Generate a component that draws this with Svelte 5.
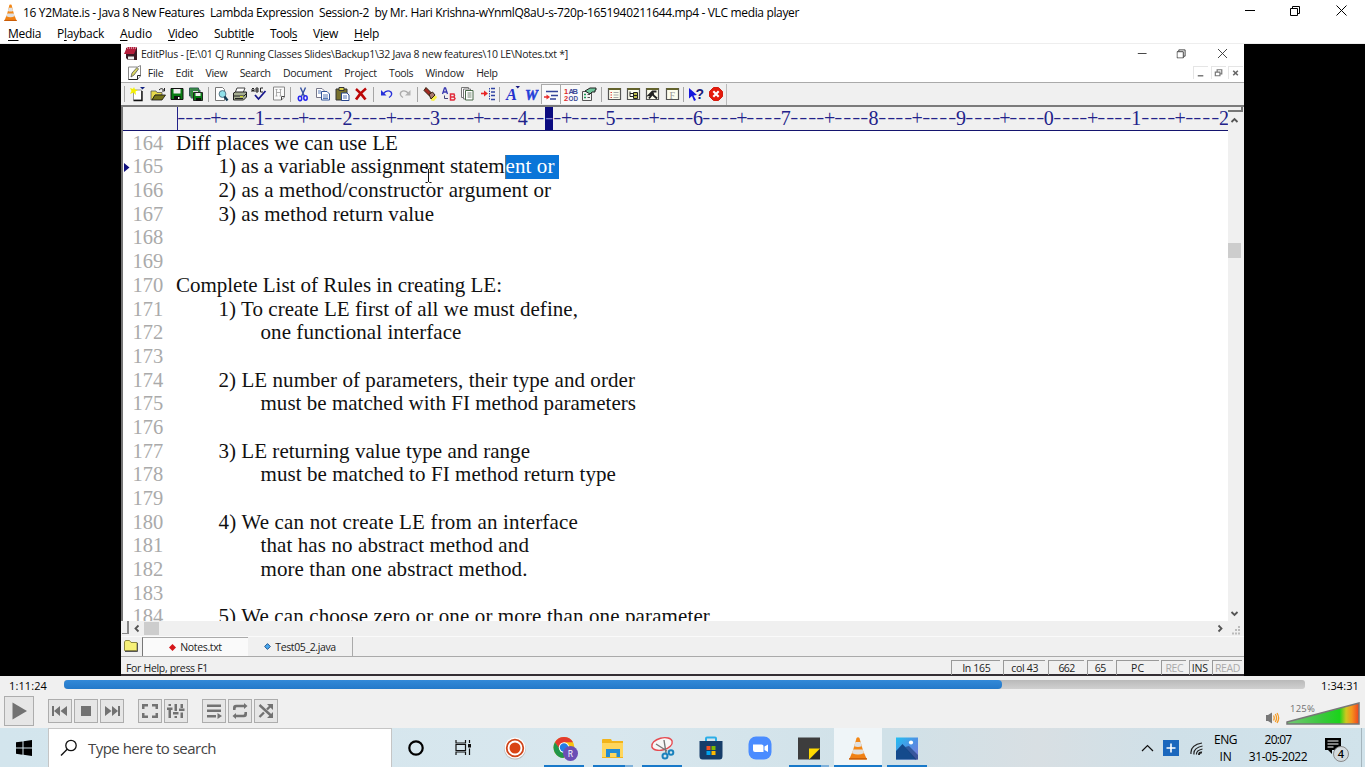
<script>
  // Spreads a run of text over the given width.
  function fit(node, width) {
    node.style.letterSpacing = '0px';
    const natural = node.getBoundingClientRect().width;
    const count = node.textContent.length;
    node.style.letterSpacing = (width - natural) / count + 'px';
  }

  const vlcMenu = [
    ['', 'M', 'edia', 33], ['P', 'l', 'ayback', 47], ['', 'A', 'udio', 32], ['', 'V', 'ideo', 30],
    ['Subti', 't', 'le', 40], ['Tool', 's', '', 27], ['V', 'i', 'ew', 25], ['', 'H', 'elp', 25]
  ];
  const editMenu = [
    ['File', 15.5], ['Edit', 17.5], ['View', 22], ['Search', 31], ['Document', 49],
    ['Project', 32.5], ['Tools', 24], ['Window', 38.5], ['Help', 21.5]
  ];
  const tools = [
    'new', 'open', 'save', 'saveall', '|', 'preview', 'print', 'spell', 'hex', '|',
    'cut', 'copy', 'paste', 'delete', '|', 'undo', 'redo', '|', 'find', 'replace', 'pages', 'goto', '|',
    'font', 'word', 'wrap', 'numbers', 'prefs', '|', 'list', 'tree', 'run', 'func', '|', 'help', 'stop'
  ];
  const ruler = Array.from({ length: 120 }, (_, i) => {
    if (i % 10 === 9) return String(((i + 1) / 10) % 10);
    return i % 10 === 4 ? '+' : '-';
  });
  const lines = [
    [164, 0, 'Diff places we can use LE', 222],
    [165, 1, '1) as a variable assignment statem', 286, 'ent or', 49],
    [166, 1, '2) as a method/constructor argument or', 332.5],
    [167, 1, '3) as method return value', 215.5],
    [168], [169],
    [170, 0, 'Complete List of Rules in creating LE:', 326],
    [171, 1, '1) To create LE first of all we must define,', 359.5],
    [172, 2, 'one functional interface', 201],
    [173],
    [174, 1, '2) LE number of parameters, their type and order', 416.5],
    [175, 2, 'must be matched with FI method parameters', 375.5],
    [176],
    [177, 1, '3) LE returning value type and range', 311.5],
    [178, 2, 'must be matched to FI method return type', 355.5],
    [179],
    [180, 1, '4) We can not create LE from an interface', 359.5],
    [181, 2, 'that has no abstract method and', 268.5],
    [182, 2, 'more than one abstract method.', 267],
    [183],
    [184, 1, '5) We can choose zero or one or more than one parameter', 491.5]
  ];
  const status = [
    ['ln 165', 49, 28], ['col 43', 42, 27], ['662', 36, 16], ['65', 26, 11], ['PC', 43, 13],
    ['REC', 25, 18, true], ['INS', 20, 16], ['READ', 30, 25, true]
  ];
  const controls = [
    ['prev', 'stopb', 'next'], ['full', 'eq'], ['playlist', 'loop', 'shuffle']
  ];
  const apps = [
    ['cortana'], ['taskview'], ['record'], ['chrome', 'on'], ['explorer', 'multi'], ['snip', 'on'],
    ['store'], ['zoom'], ['sticky', 'multi'], ['vlc', 'active'], ['photos', 'on']
  ];
</script>

{#snippet cone()}
  <path d="M3.4 11.5h9.2l2 4.5H1.4z" fill="#f08015" />
  <path d="M6.9.8Q8 0 9.1.8L12.4 12Q8 14.4 3.6 12z" fill="#f38716" />
  <path d="M6.1 3.6h3.8l.9 3Q8 7.6 5.2 6.6zM4.5 9h7l.8 2.5q-4.3 2-8.6 0z" fill="#e0e0e0" />
  <path d="M1.4 15h13.2v1H1.4z" fill="#c95d08" />
{/snippet}

{#snippet winButtons(gap1, gap2)}
  <svg width="11" height="11" viewBox="0 0 11 11"><path d="M0 5.5h10" /></svg>
  <svg width="11" height="11" viewBox="0 0 11 11" style:margin-left="{gap1}px"><path d="M.5 3.5h7v7h-7zM2.5 3V1.500h7v7H8" /></svg>
  <svg width="11" height="11" viewBox="0 0 11 11" style:margin-left="{gap2}px"><path d="M.5.5l10 10M10.500.5l-10 10" /></svg>
{/snippet}

{#snippet tool(n)}
  <svg width="16" height="16" viewBox="0 0 16 16" fill="none">
    {#if n === 'new'}
      <path d="M3.500 4h8v10h-8z" fill="#fff" stroke="#999" /><path d="M12 5v9.500H3.500" stroke="#111" stroke-width="1.4" />
      <path d="M4 1l1 2.500L8 4 5.500 5.500 6 9 3.500 6.500 0 8l1.500-3L0 2l3 1z" fill="#f4f000" /><path d="M10 1h5l-2.500 2.500z" fill="#102080" />
    {:else if n === 'open'}
      <path d="M1 5h5l1 1.500h5V9H5l-3 5H1z" fill="#e6d94a" stroke="#555" stroke-width=".8" /><path d="M5 9h10.500L12 14H2z" fill="#77751a" stroke="#111" stroke-width=".8" /><path d="M9 4q3-3 5 .5M14.500 2v3H12" stroke="#222" />
    {:else if n === 'save'}
      <path d="M2 2.500h12v11H2z" fill="#087c14" stroke="#111" /><path d="M4.500 3h7v4.500h-7z" fill="#eee" /><path d="M5 10h6.500v4H5z" fill="#111" /><path d="M9 11h1.500v2H9z" fill="#fff" />
    {:else if n === 'saveall'}
      <path d="M1.500 2h9v8h-9z" fill="#31a532" stroke="#355" /><path d="M3 4h9v8H3z" fill="#289c2c" stroke="#466" /><path d="M5 5h5v2H5z" fill="#ddd" /><path d="M5.500 6.500h9v8h-9z" fill="#087c14" stroke="#222" /><path d="M7.500 7h5v3h-5z" fill="#eee" /><path d="M8 12h5v3H8z" fill="#111" />
    {:else if n === 'preview'}
      <path d="M2.500 1.500h7l2 2v11h-9z" fill="#fff" stroke="#777" /><circle cx="9.500" cy="8" r="3.400" fill="#8fe1ea" stroke="#578" /><path d="M11.500 10.500l3 4" stroke="#133b55" stroke-width="2.400" />
    {:else if n === 'print'}
      <path d="M5 2h8l-2 5H3z" fill="#fff" stroke="#444" /><path d="M1.500 7l2-1h11v5l-3 3h-10z" fill="#a5ad91" stroke="#222" /><path d="M2 10h10l2-2M3 12.500h8" stroke="#222" /><path d="M8 10.700h3" stroke="#e7ef16" />
    {:else if n === 'spell'}
      <path d="M1 6V3l1-1 1 1v3M1 4.500h2M5 2v4h2V2zM5 4h2M12 2H9.500v4H12" stroke="#222" /><path d="M4 9l3.500 4L14.500 5" stroke="#16168d" stroke-width="1.800" />
    {:else if n === 'hex'}
      <path d="M2.500 1h11v10l-3 3h-8z" fill="#fafafa" stroke="#888" /><path d="M13.500 10.500h-3V14" stroke="#444" /><path d="M5.500 3.500v6.500M9.500 3.500v6.500M5.500 6.500h4M4.500 3.500h2M8.500 3.500h2M4.500 10h2M8.500 10h2" stroke="#999" stroke-width=".8" />
    {:else if n === 'cut'}
      <path d="M5.500 1.500l4 9M10.500 1.500l-4 9" stroke="#3450a0" stroke-width="1.400" /><ellipse cx="5" cy="12.500" rx="1.700" ry="2.200" stroke="#2424ef" stroke-width="1.500" /><ellipse cx="10.500" cy="12" rx="1.700" ry="2.200" stroke="#2424ef" stroke-width="1.500" />
    {:else if n === 'copy'}
      <path d="M1.500 2.500H7l2 2v7H1.500z" fill="#fff" stroke="#778" /><path d="M6.500 5.500H12l2.500 2.500v6h-8z" fill="#fff" stroke="#34579b" /><path d="M3 5h3M3 7h3M8 9h5M8 11h5M8 12.500h5" stroke="#567bb8" />
    {:else if n === 'paste'}
      <path d="M2 3h11v11H2z" fill="#77702c" stroke="#333" /><path d="M5 1.500h5v3H5z" fill="#ded44b" stroke="#333" /><path d="M7.500 7H13l2 2v5.500H7.500z" fill="#fff" stroke="#29468d" /><path d="M9 10h4M9 12h4" stroke="#5474b9" />
    {:else if n === 'delete'}
      <path d="M3 3q5 4 9.500 10.500M13 2.500Q7 7 3 13.500" stroke="#bc0707" stroke-width="2.600" />
    {:else if n === 'undo'}
      <path d="M5 8q4-5 8-2 2 3-2 5.500" stroke="#2630da" stroke-width="1.400" /><path d="M3 4v5.500h5.500z" fill="#2630da" />
    {:else if n === 'redo'}
      <path d="M12 8Q8 3 4 6q-2 3 2 5.500" stroke="#aaa" stroke-width="1.400" /><path d="M13.500 4v5.500H8z" fill="#b2b2b2" />
    {:else if n === 'find'}
      <path d="M9 11l5-1.500 1 2-3 3.500-3-.5z" fill="#f8f24c" /><path d="M4 1.500l5.500 5.500L7 9.500 2 4.500z" fill="#a22a22" stroke="#321" /><path d="M7 8.500L10.500 6l2.500 3-4 4z" fill="#a87a70" stroke="#321" />
    {:else if n === 'replace'}
      <path d="M1.500 8l2-6h1l2 6M2.500 6h3" stroke="#3838b0" stroke-width="1.300" /><path d="M3.500 9.500v3h3.500" stroke="#447" /><path d="M9.500 8v6H13l1-1.500-1-1.500H9.500H13l.5-1.500L13 8z" stroke="#e12d3c" stroke-width="1.500" />
    {:else if n === 'pages'}
      <path d="M1.500 1.500h7v10h-7z" fill="#fff" stroke="#777" /><path d="M3.500 3h7v10h-7z" fill="#fff" stroke="#777" /><path d="M5.500 4.500H13V14H5.500z" fill="#fff" stroke="#486948" /><path d="M7.500 7h4M7.500 9h4M7.500 11h4" stroke="#738873" />
    {:else if n === 'goto'}
      <path d="M1 7.500h5" stroke="#e82727" stroke-width="1.600" /><path d="M4 4.500l4 3-4 3z" fill="#e82727" /><path d="M9.500 2v12" stroke="#3044a4" stroke-dasharray="1.500 1" /><path d="M11 2.500h4M11 6h4M11 9.500h4M11 13.500h4" stroke="#3044a4" stroke-width="1.300" />
    {:else if n === 'font'}
      <path d="M11.500 0h4.500l-2.200 2.500z" fill="#171782" /><text x="2" y="13.500" font-size="16.500" font-style="italic" font-weight="bold" fill="#2630ce" textLength="11" lengthAdjust="spacingAndGlyphs">A</text>
    {:else if n === 'word'}
      <text x="2" y="13.500" font-size="15" font-style="italic" font-weight="bold" fill="#2440d9" stroke="#2440d9" stroke-width=".5" textLength="13" lengthAdjust="spacingAndGlyphs">W</text>
    {:else if n === 'wrap'}
      <path d="M3 4.500h12M8 8.500h7M7 12h6" stroke="#334399" stroke-width="1.400" /><path d="M1 10h4" stroke="#e82c2c" stroke-width="1.500" /><path d="M3.500 7.500l3.500 2.500-3.500 2.500z" fill="#e82c2c" />
    {:else if n === 'numbers'}
      <g font-family="Liberation Sans" font-size="7.500" font-weight="bold"><text x="1" y="7" fill="#dd2929">1</text><text x="5.500" y="7" fill="#3e4d98" textLength="9.500">AB</text><text x="1" y="14" fill="#dd2929">2</text><text x="5.500" y="14" fill="#3e4d98" textLength="9.500" lengthAdjust="spacingAndGlyphs">OD</text></g>
    {:else if n === 'prefs'}
      <path d="M1.500 5.500h9v9h-9z" fill="#f4f4f4" stroke="#555" /><path d="M3 8.500h2M3 11.500h2" stroke="#1b9b59" stroke-width="1.500" /><path d="M6.500 8.500H9M6.500 11.500H9" stroke="#555" /><path d="M4 5l5-3h6v2h-1v2h-3L9 8z" fill="#70c69c" stroke="#222" />
    {:else if n === 'list' || n === 'tree' || n === 'run' || n === 'func'}
      <path d="M2.500 2.500h12v11h-12z" fill="#fdfdee" stroke="#555" stroke-width="1.200" /><path d="M2.500 3h12" stroke="#63632c" stroke-width="2" />
      {#if n === 'list'}<path d="M4.500 6.500H6M4.500 9H6M4.500 11.500H6" stroke="#d44" /><path d="M7.500 6.500h5M7.500 9h5M7.500 11.500h5" stroke="#aaa" />{/if}
      {#if n === 'tree'}<path d="M5 5.500v5h3M5 7.500h3" stroke="#222" /><path d="M8.500 6.500h4v6h-4z" fill="#bfbd4a" stroke="#222" /><path d="M8.500 9.500h4" stroke="#222" />{/if}
      {#if n === 'run'}<path d="M12.500 5.500h-4l-3.500 3.500 3-.5-3 4M8.500 6.500l1 3 3.500 3" stroke="#222" stroke-width="1.900" />{/if}
      {#if n === 'func'}<text x="5.500" y="12.500" font-size="10" fill="#999">F</text>{/if}
    {:else if n === 'help'}
      <path d="M1 2l8 7-3.500.5L8 14l-2 1-2-5-3 2.500z" fill="#1616dd" /><text x="7.500" y="13" font-family="Liberation Sans" font-size="14" font-weight="bold" fill="#1b1b7b">?</text>
    {:else if n === 'stop'}
      <path d="M5.500 1.500h5l4 4v5l-4 4h-5l-4-4v-5z" fill="#e51b0c" stroke="#d41c10" /><path d="M5.300 5.300l5.400 5.400M10.700 5.300l-5.400 5.400" stroke="#fff" stroke-width="2.100" />
    {/if}
  </svg>
{/snippet}

{#snippet control(n)}
  <svg width="22" height="22" viewBox="0 0 22 22" fill="#727272">
    {#if n === 'prev'}<path d="M3 6h2v10H3zM5 11l6-5v10zM11.500 11L18 6v10z" />
    {:else if n === 'stopb'}<path d="M6 6h10v10H6z" />
    {:else if n === 'next'}<path d="M17 6h2v10h-2zM17 11l-6-5v10zM10.500 11L4 6v10z" />
    {:else if n === 'full'}<path d="M3 4h6v2.500H5.500V9H3zM13 4h6v5h-2.500V6.500H13zM3 13h2.500v2.500H9V18H3zM16.500 13H19v5h-6v-2.500h3.500z" />
    {:else if n === 'eq'}<path d="M3.500 8.500h2.500v9.500H3.500zM2 7.500h5.500V10H2zM3.500 4h2.500v2H3.500zM9.500 4H12v7H9.500zM8 12h5.500v2.500H8zM9.500 16H12v2H9.500zM15.500 4H18v4h-2.500zM14 8.500h5.500V11H14zM15.500 12.500H18V18h-2.500z" />
    {:else if n === 'playlist'}<path d="M4 4.500h14V7H4zM4 9.500h14V12H4zM4 15h9v2.500H4zM14.500 13l4.500 3-4.500 3z" />
    {:else if n === 'loop'}<path d="M4 10V8q0-3.300 3-3.300h8V3l3.500 3L15 9V7.200H7.500Q6.500 7.200 6.500 10zM18 12v2q0 3.300-3 3.300H7V19l-3.500-3L7 13v1.800h7.500q1 0 1-2.800z" />
    {:else if n === 'shuffle'}<path d="M4.500 5l12 11M4.500 17L9 12.500M12 9.500l4-4" stroke="#727272" stroke-width="2.400" /><path d="M12 4h6v6zM18 12v6h-6z" />{/if}
  </svg>
{/snippet}

{#snippet app(n)}
  <svg width="26" height="26" viewBox="0 0 26 26" fill="none">
    {#if n === 'cortana'}<circle cx="13" cy="13" r="6.700" stroke="#000" stroke-width="2.200" />
    {:else if n === 'taskview'}<g stroke="#111" stroke-width="1.200"><path d="M4 5v3h9.500V5M4 20v-3h9.500v3M4 9.500h9.500v6H4zM17.500 5v3M17.500 13.500V20" /></g><path d="M16 9h3v3.500h-3z" fill="#111" />
    {:else if n === 'record'}<circle cx="13" cy="13.800" r="10.800" fill="#bbb" /><circle cx="13" cy="13" r="10.500" fill="#fff" /><circle cx="13" cy="13" r="8.300" stroke="#cf461c" stroke-width="1.800" /><circle cx="13" cy="13" r="5.500" fill="#d94314" />
    {:else if n === 'chrome'}<circle cx="12" cy="12.500" r="10.500" fill="#f8c40f" /><path d="M2.900 7.200a10.500 10.500 0 0 1 18.200 0H12L8 15z" fill="#e33b2e" /><path d="M2.900 7.200a10.500 10.500 0 0 0 8.600 15.800l5-8-7 1z" fill="#21964a" /><circle cx="12" cy="12.500" r="5.200" fill="#fff" /><circle cx="12" cy="12.500" r="4.200" fill="#247ce6" /><circle cx="18.500" cy="18.500" r="7.500" fill="#6b4eb5" /><text x="15.700" y="21.800" font-family="Open Sans" font-size="8.500" fill="#fff">R</text>
    {:else if n === 'explorer'}<path d="M2 5q0-1 1-1h8l1 2h11v17H2z" fill="#f2b41b" /><path d="M2 8h21v14H2z" fill="#ffd65c" /><path d="M6 22v-8h14v8h-3.500v-4h-6.500v4z" fill="#258bd1" />
    {:else if n === 'snip'}<ellipse cx="13" cy="9" rx="10.500" ry="6" transform="rotate(-15 13 9)" fill="#f7f7f7" stroke="#e64a50" stroke-width="1.400" /><path d="M7 9l11 7M15 5l2 13" stroke="#777" stroke-width="1.400" /><circle cx="16" cy="21" r="2.500" stroke="#1b82bd" stroke-width="2" /><circle cx="22" cy="17.500" r="2.300" stroke="#1b82bd" stroke-width="2" />
    {:else if n === 'store'}<path d="M8 7V3.500q0-1 1-1h8q1 0 1 1V7" stroke="#2caee7" stroke-width="2" /><path d="M1.500 6h23v15q0 3.500-3 3.500h-17q-3 0-3-3.500z" fill="#163d69" /><path d="M8.500 11h4v4h-4z" fill="#f25022" /><path d="M13.500 11h4v4h-4z" fill="#7fba00" /><path d="M8.500 16h4v4h-4z" fill="#00a4ef" /><path d="M13.500 16h4v4h-4z" fill="#ffb900" />
    {:else if n === 'zoom'}<rect x="1.500" y="1.500" width="23" height="23" rx="7.500" fill="#4a8cff" /><path d="M6 9.500h8.500q2 0 2 2V17H8q-2 0-2-2zM17.500 11.500L21 9.500v7.500l-3.500-2z" fill="#fff" />
    {:else if n === 'sticky'}<path d="M2 2.500h22V14L13.500 24.500H2z" fill="#3d3d3d" /><path d="M13 24.500h11V13.500z" fill="#2a2a2a" /><path d="M13 13.500h11L13 24.500z" fill="#ffda00" />
    {:else if n === 'vlc'}<g transform="translate(2.200 1.800) scale(1.350 1.420)">{@render cone()}</g>
    {:else if n === 'photos'}<defs><linearGradient id="sky" x2="1" y2="1"><stop stop-color="#22bff1" /><stop offset=".5" stop-color="#4d92e5" /><stop offset="1" stop-color="#8177d4" /></linearGradient></defs><path d="M2 2.500h22v22H2z" fill="url(#sky)" /><path d="M2 16l6.500-7 14 15.500H2z" fill="#144a8c" /><path d="M11 12l4-1 9 9v4.500h-3z" fill="#1d3d79" opacity=".65" /><circle cx="17" cy="7.500" r="2.100" fill="#fff" />{/if}
  </svg>
{/snippet}

<div class="screen">
  <header class="titlebar">
    <svg class="vlcicon" width="15" height="17" viewBox="0 0 16 16" preserveAspectRatio="none">{@render cone()}</svg>
    <span class="run" use:fit={776}>16 Y2Mate.is - Java 8 New Features&nbsp; Lambda Expression&nbsp; Session-2&nbsp; by Mr. Hari Krishna-wYnmlQ8aU-s-720p-1651940211644.mp4 - VLC media player</span>
    <div class="winbtns">{@render winButtons(34, 35)}</div>
  </header>
  <nav class="vlcmenu">
    {#each vlcMenu as [a, b, c, w]}
      <span class="run" use:fit={w}>{a}<u>{b}</u>{c}</span>
    {/each}
  </nav>

  <main class="video">
    <section class="editor">
      <div class="ep-title">
        <svg width="14" height="16" viewBox="0 0 14 16"><path d="M2 2h11v12H4L2 12z" fill="#391923" /><path d="M3 1h10L10 8H0z" fill="#b51e3c" /><path d="M4 10.500h6v3H4z" fill="#eee" /><path d="M3 2h9" stroke="#eee" stroke-dasharray="1 1" /></svg>
        <span class="run" use:fit={427}>EditPlus - [E:\01 CJ Running Classes Slides\Backup1\32 Java 8 new features\10 LE\Notes.txt *]</span>
        <div class="winbtns small">{@render winButtons(28, 30)}</div>
      </div>
      <div class="ep-menu">
        <svg width="13" height="15" viewBox="0 0 13 15"><path d="M.5 2h9l3-1.500V11l-3 3.500h-9z" fill="#fff" stroke="#888" /><path d="M12.500 10.500h-3v4M.5 14.500h9" stroke="#222" fill="none" /><path d="M3 12l1-4 5-5.500L10.500 4 6 10z" fill="#dcd860" stroke="#555" stroke-width=".8" /></svg>
        {#each editMenu as [t, w]}<span class="run" use:fit={w}>{t}</span>{/each}
        <div class="mdi">
          <svg width="15" height="13" viewBox="0 0 15 13"><path d="M4 9.500h6" stroke="#777" stroke-width="1.600" /></svg>
          <svg width="15" height="13" viewBox="0 0 15 13" fill="none"><path d="M3.500 5.500h5v4h-5zM5.500 5V3h5v4.500H9" stroke="#777" stroke-width="1.300" /></svg>
          <svg width="15" height="13" viewBox="0 0 15 13"><path d="M4.500 4l5 5M9.500 4l-5 5" stroke="#666" stroke-width="1.700" /></svg>
        </div>
      </div>
      <div class="toolbar">
        <i class="grip"></i>
        {#each tools as t}
          {#if t === '|'}<i class="sep"></i>
          {:else}<span class="tool" class:pressed={t === 'wrap' || t === 'numbers'}>{@render tool(t)}</span>{/if}
        {/each}
        <i class="toolend"></i>
      </div>
      <div class="pane">
        <div class="doc">
          <div class="ruler">
            {#each ruler as ch, i}<span class:cur={i === 42} class:dash={ch === '-'}><b>{ch}</b></span>{/each}
          </div>
          <div class="text">
            {#each lines as [no, ind, t, w, sel, sw]}
              <div class="line">
                <span class="mark">{#if no === 165}<svg width="6" height="9" viewBox="0 0 6 9"><path d="M0 0l5.500 4.500L0 9z" fill="#10107e" /></svg>{/if}</span>
                <span class="no">{no}</span>
                {#if t}<span class="code indent{ind}"><span class="run" use:fit={w}>{t}</span>{#if sel}<mark><span class="run" use:fit={sw}>{sel}</span></mark>{/if}</span>{/if}
              </div>
            {/each}
            <svg class="ibeam" width="7" height="15" viewBox="0 0 7 15"><path d="M.5.5h2l1 1 1-1h2M3.500 1v13M.5 14.500h2l1-1 1 1h2" stroke="#111" fill="none" /></svg>
          </div>
        </div>
        <div class="vscroll">
          <i class="split"></i>
          <svg width="9" height="6" viewBox="0 0 9 6"><path d="M1.500 5l3-3 3 3" /></svg>
          <i class="thumb"></i>
          <svg class="down" width="9" height="6" viewBox="0 0 9 6"><path d="M1.500 1l3 3 3-3" /></svg>
        </div>
      </div>
      <div class="hscroll">
        <i class="splith"></i>
        <svg width="6" height="9" viewBox="0 0 6 9"><path d="M4.500 1.500l-3 3 3 3" /></svg>
        <i class="hthumb"></i>
        <svg class="right" width="6" height="9" viewBox="0 0 6 9"><path d="M1.500 1.500l3 3-3 3" /></svg>
        <svg class="sizer" width="9" height="9" viewBox="0 0 9 9"><path d="M6 1h2M3 4h2M6 4h2M0 7.500h2M3 7.500h2M6 7.500h2" /></svg>
      </div>
      <div class="tabs">
        <svg class="folder" width="14" height="12" viewBox="0 0 14 12"><path d="M.5 2l1-1.500h4L7 2.500h6v8H.5z" fill="#f7f178" stroke="#8f8a40" /><path d="M1 11.500h12.500V3" stroke="#555" fill="none" /></svg>
        <div class="tab active"><svg width="7" height="7" viewBox="0 0 8 8"><path d="M4 0l4 4-4 4-4-4z" fill="#d5161a" /></svg><span class="run" use:fit={41.5}>Notes.txt</span></div>
        <div class="tab"><svg width="7" height="7" viewBox="0 0 8 8"><path d="M4 .7L7.300 4 4 7.300.7 4z" fill="#4aa7ed" stroke="#174a84" /></svg><span class="run" use:fit={60.500}>Test05_2.java</span></div>
      </div>
      <div class="status">
        <span class="run helptext" use:fit={82}>For Help, press F1</span>
        {#each status as [t, w, tw, dim]}
          <span class="cell" class:dim style:width="{w}px"><span class="run" use:fit={tw}>{t}</span></span>
        {/each}
      </div>
    </section>
  </main>

  <footer class="player">
    <div class="seek">
      <span class="run" use:fit={38}>1:11:24</span>
      <div class="track"><i></i></div>
      <span class="run" use:fit={38}>1:34:31</span>
    </div>
    <div class="buttons">
      <button class="play" aria-label="Play"><svg width="28" height="28" viewBox="0 0 28 28"><path d="M7.500 5.500v17L22 14z" fill="#727272" /></svg></button>
      {#each controls as group}
        <div class="group">{#each group as n}<button aria-label={n}>{@render control(n)}</button>{/each}</div>
      {/each}
      <div class="volume">
        <svg class="speaker" width="16" height="14" viewBox="0 0 16 14" fill="none"><path d="M1 4h2l4-2.500v11L3 10H1z" fill="#777" /><path d="M8.500 4.500q1.500 2.500 0 5M10.300 3q2.500 4 0 8M12 2q3.300 5 0 10" stroke="#f49b25" stroke-width="1.300" /></svg>
        <div class="ramp">
          <svg width="74" height="23" viewBox="0 0 74 23"><defs><linearGradient id="vol"><stop stop-color="#75c875" /><stop offset=".5" stop-color="#38c83b" /><stop offset=".73" stop-color="#1bd41b" /><stop offset=".82" stop-color="#cfc81f" /><stop offset=".9" stop-color="#f5941c" /><stop offset="1" stop-color="#f04020" /></linearGradient></defs><path d="M1 20L73 1v21H1z" fill="url(#vol)" stroke="#777" stroke-width="1.500" /></svg>
          <span class="run pct" use:fit={25}>125%</span>
        </div>
      </div>
    </div>
  </footer>

  <div class="taskbar">
    <div class="start"><svg width="16" height="16" viewBox="0 0 16 16"><path d="M0 2.300L6.500 1.400v6.200H0zM7.500 1.200L16 0v7.600H7.500zM0 8.500h6.500v6.200L0 13.800zM7.500 8.500H16V16l-8.500-1.200z" /></svg></div>
    <div class="search">
      <svg width="18" height="18" viewBox="0 0 18 18"><circle cx="11" cy="6.500" r="5.200" fill="none" stroke="#111" stroke-width="1.300" /><path d="M7.200 10.300L1 16.500" stroke="#111" stroke-width="1.400" /></svg>
      <span class="run" use:fit={128}>Type here to search</span>
    </div>
    <div class="apps">
      {#each apps as [n, state]}<div class="app {n} {state ?? ''}">{@render app(n)}</div>{/each}
    </div>
    <div class="tray">
      <svg width="13" height="8" viewBox="0 0 13 8"><path d="M1 7l5.500-5.500L12 7" fill="none" stroke="#111" stroke-width="1.200" /></svg>
      <svg class="plus" width="16" height="16" viewBox="0 0 16 16"><path d="M0 0h16v16H0z" fill="#1b67bd" /><path d="M8 3.500v9M3.500 8h9" stroke="#fff" stroke-width="1.600" /></svg>
      <svg class="wifi" width="14" height="14" viewBox="0 0 14 14" fill="none" stroke="#222" stroke-width="1.200"><path d="M1 12Q0 3 12 1M4 12.500Q3 6 12.500 4M6.500 12.500Q6 8.500 12.500 7" /><path d="M9 13q0-3 3-2.500" stroke-width="2" /></svg>
      <div class="lang"><span class="run" use:fit={23}>ENG</span><span class="run" use:fit={12}>IN</span></div>
      <div class="clock"><span class="run" use:fit={27}>20:07</span><span class="run" use:fit={58.500}>31-05-2022</span></div>
      <div class="notes">
        <svg width="16" height="16" viewBox="0 0 16 16"><path d="M0 0h16v12H7v4l-4-4H0z" /><path d="M2.500 3h11M2.500 6h11M2.500 9h6" stroke="#fff" /></svg>
        <span class="badge">4</span>
      </div>
      <i class="peek"></i>
    </div>
  </div>
</div>

<style>
  :global(body) { margin: 0; overflow: hidden; }
  .screen { width: 1365px; height: 767px; display: flex; flex-direction: column; background: #fff; font-family: "Open Sans", "Noto Sans", sans-serif; font-size: 12px; color: #000; overflow: hidden; }
  .screen * { box-sizing: border-box; }
  svg { display: block; flex: none; }
  .run { display: inline-block; white-space: nowrap; flex: none; }
  i { display: block; flex: none; }
  .titlebar { height: 24px; display: flex; align-items: center; padding: 0 18px 0 3px; }
  .vlcicon { margin-right: 5px; }
  .winbtns { margin-left: auto; display: flex; height: 11px; margin-top: -4px; }
  .winbtns svg { fill: none; stroke: #000; stroke-width: 1; }
  .winbtns.small svg { stroke: #333; transform: scale(.9); }
  .vlcmenu { height: 20px; display: flex; align-items: center; gap: 16px; padding-left: 8px; border-bottom: 1px solid #eee; }
  u { text-underline-offset: 2px; text-decoration-thickness: 1px; }
  .video { height: 632px; background: #000; padding: 0 121px; flex: none; }
  .editor { width: 1123px; height: 632px; background: #f0f0f0; display: flex; flex-direction: column; font-size: 10.5px; color: #222; border-bottom: 2px solid #332e33; }
  .ep-title { height: 20px; background: #fff; display: flex; align-items: center; padding: 0 16px 0 3px; flex: none; }
  .ep-title > .run { margin-left: 3px; }
  .ep-title .winbtns { margin-top: -2px; }
  .ep-menu { height: 19px; background: #fff; display: flex; align-items: center; gap: 12.3px; padding: 0 0 1px 7px; border-bottom: 1px solid #aaa; flex: none; }
  .ep-menu > svg { margin-right: -5.500px; }
  .mdi { margin-left: auto; display: flex; gap: 2.500px; padding-right: 1px; }
  .mdi svg { border-left: 1px solid #e5e5e5; border-top: 1px solid #e5e5e5; }
  .toolbar { height: 22px; display: flex; align-items: center; padding: 0 0 0 3px; flex: none; }
  .grip { width: 1px; height: 16px; background: #aaa; margin-right: 3.800px; }
  .tool { width: 19.300px; height: 20px; display: flex; justify-content: center; align-items: center; flex: none; font-family: "Liberation Serif", serif; }
  .tool.pressed { background: #fafafa; border-left: 1px solid #aaa; border-top: 1px solid #aaa; }
  .sep { width: 5.270px; height: 15px; background: linear-gradient(90deg, transparent 2px, #a5a5a5 2px, #a5a5a5 3px, transparent 3px); }
  .toolend { width: 1px; height: 21px; background: #bbb; margin-left: 1px; }
  .pane { height: 516px; display: flex; border-top: 2px solid #7b7b7b; flex: none; }
  .doc { width: 1107px; border-left: 2px solid #777; overflow: hidden; background: #fff; }
  .ruler { height: 24px; border-bottom: 1px solid #14146e; background: #f0f0f0; padding-left: 53.500px; display: flex; font: 20px/23px "Liberation Serif", serif; color: #22228a; }
  .ruler span { width: 8.780px; flex: none; display: flex; justify-content: center; }
  .ruler span:first-child { border-left: 1px solid #22228a; }
  .ruler b { font-weight: 400; }
  .ruler .dash b { transform: translateY(-1px) scale(1.200, .8); }
  .ruler .cur { background: #0b0b80; color: #8686d0; }
  .text { position: relative; height: 490px; padding-top: .800px; overflow: hidden; font: 21px/23.680px "Liberation Serif", serif; color: #111; }
  .line { height: 23.680px; display: flex; align-items: center; }
  .mark { width: 9.500px; padding-left: 1px; flex: none; }
  .no { width: 43.500px; color: #aaa; flex: none; font-size: 20.500px; }
  .code { display: flex; height: 23.680px; }
  .indent1 { padding-left: 42.500px; }
  .indent2 { padding-left: 84.500px; }
  mark { background: #0a75d8; color: #fff; padding: 0 4px 0 0; height: 23.680px; border-left: 1px solid #777; }
  .ibeam { position: absolute; left: 302px; top: 37px; }
  .vscroll { width: 16px; background: #f0f0f0; padding-right: 3px; display: flex; flex-direction: column; align-items: center; }
  .vscroll svg, .hscroll svg { fill: none; stroke: #555; stroke-width: 1.800; }
  .split { width: 15px; height: 5px; margin-bottom: 5px; border: solid #777; border-width: 0 2px 2px 0; align-self: flex-start; }
  .thumb { width: 13px; height: 15px; background: #cdcdcd; margin-top: 120px; }
  .down { margin-top: auto; margin-bottom: 4px; }
  .hscroll { height: 16px; display: flex; align-items: center; border-bottom: 1px solid #fafafa; flex: none; }
  .splith { width: 7px; height: 13px; border: solid #888; border-width: 0 2px 1px 0; margin: 0 5px 0 1px; align-self: flex-start; }
  .hthumb { width: 15px; height: 13px; background: #cdcdcd; margin-left: 4px; }
  .hscroll .right { margin-left: auto; }
  .hscroll .sizer { stroke: #bbb; margin: 4px 3px 0 9px; }
  .tabs { height: 20px; display: flex; border-bottom: 1px solid #aaa; flex: none; }
  .folder { margin: 3px 4px 0 3px; }
  .tab { width: 105px; height: 19px; display: flex; align-items: center; justify-content: center; gap: 4px; border-right: 1px solid #aaa; }
  .tab.active { width: 106px; background: #fafafa; border-left: 1px solid #777; border-top: 1px solid #aaa; border-right: 0; }
  .status { height: 18px; display: flex; align-items: flex-end; gap: 2.800px; padding: 0 2px 0 5px; flex: none; }
  .helptext { margin-right: auto; }
  .cell { height: 15px; line-height: 15px; border-left: 1px solid #999; border-top: 1px solid #999; text-align: center; flex: none; }
  .dim { color: #aaa; }
  .player { height: 52px; background: #f0f0f0; display: flex; flex-direction: column; flex: none; }
  .seek { height: 20px; display: flex; align-items: center; padding: 0 0 1px 9px; font-size: 11px; }
  .track { width: 1241px; height: 9px; margin: -2px 16px 0 17px; border-radius: 3px; background: linear-gradient(#b9b9b9, #d0d0d0); flex: none; }
  .track i { width: 938px; height: 9px; border-radius: 4px; background: linear-gradient(#3389d8, #2479c9); }
  .buttons { height: 32px; display: flex; align-items: center; padding: 0 5px 2px 4px; }
  button { width: 24px; height: 24px; padding: 0; border: 1px solid #adadad; background: #e6e6e6; flex: none; }
  .play { width: 30px; height: 30px; }
  .group { display: flex; gap: 2px; margin-left: 14px; }
  .volume { margin-left: auto; display: flex; align-items: flex-end; height: 26px; }
  .speaker { margin: 0 5px -1px 0; }
  .ramp { position: relative; margin-bottom: 1px; }
  .ramp svg { transform: translateY(2px); }
  .pct { position: absolute; left: 4px; top: 2px; font-size: 9.500px; color: #707070; }
  .taskbar { height: 39px; display: flex; background: linear-gradient(90deg, #d3e5ed 0, #d8e7ee 45%, #d0e1e8 65%, #d8dfe3 76%, #cfe0e8 86%, #d1e3eb 100%); flex: none; }
  .start { width: 48px; display: flex; align-items: center; justify-content: center; }
  .search { width: 344px; background: #fff; border: 1px solid #c5c5c5; border-bottom: 0; display: flex; align-items: center; gap: 10px; padding-left: 11px; font-size: 15px; color: #444; }
  .search .run { margin-top: -1px; }
  .apps { display: flex; }
  .app { width: 49.100px; display: flex; justify-content: center; padding-top: 7px; }
  .cortana svg, .taskview svg { transform: translateX(-1px); }
  .chrome svg { transform: translateX(1px); }
  .on { background: linear-gradient(#1879c9, #1879c9) center bottom / 40px 2px no-repeat; }
  .multi { background: linear-gradient(90deg, #1879c9 32px, #7eb1da 32px) center bottom / 40px 2px no-repeat; }
  .active.app { background: linear-gradient(#1879c9, #1879c9) center bottom / 48px 2px no-repeat, linear-gradient(#eff5f8, #eff5f8) center / 48px 100% no-repeat; }
  .tray { margin-left: auto; display: flex; align-items: center; }
  .plus { margin-left: 9px; }
  .wifi { margin: 3px 10px 0 11px; }
  .lang, .clock { display: flex; flex-direction: column; align-items: center; line-height: 17px; font-size: 12px; height: 34px; }
  .lang { width: 23px; }
  .clock { width: 60px; margin-left: 11px; }
  .notes { width: 25px; height: 26px; margin: 3px 0 0 17px; position: relative; padding-top: 2px; }
  .badge { position: absolute; left: 8px; top: 10px; width: 16px; height: 16px; border-radius: 50%; border: 1px solid #888; background: #d3dade; text-align: center; line-height: 14px; font-size: 11px; font-weight: 600; }
  .peek { width: 1px; height: 39px; background: #a5b5bd; margin: 0 3px 0 11px; }
</style>
